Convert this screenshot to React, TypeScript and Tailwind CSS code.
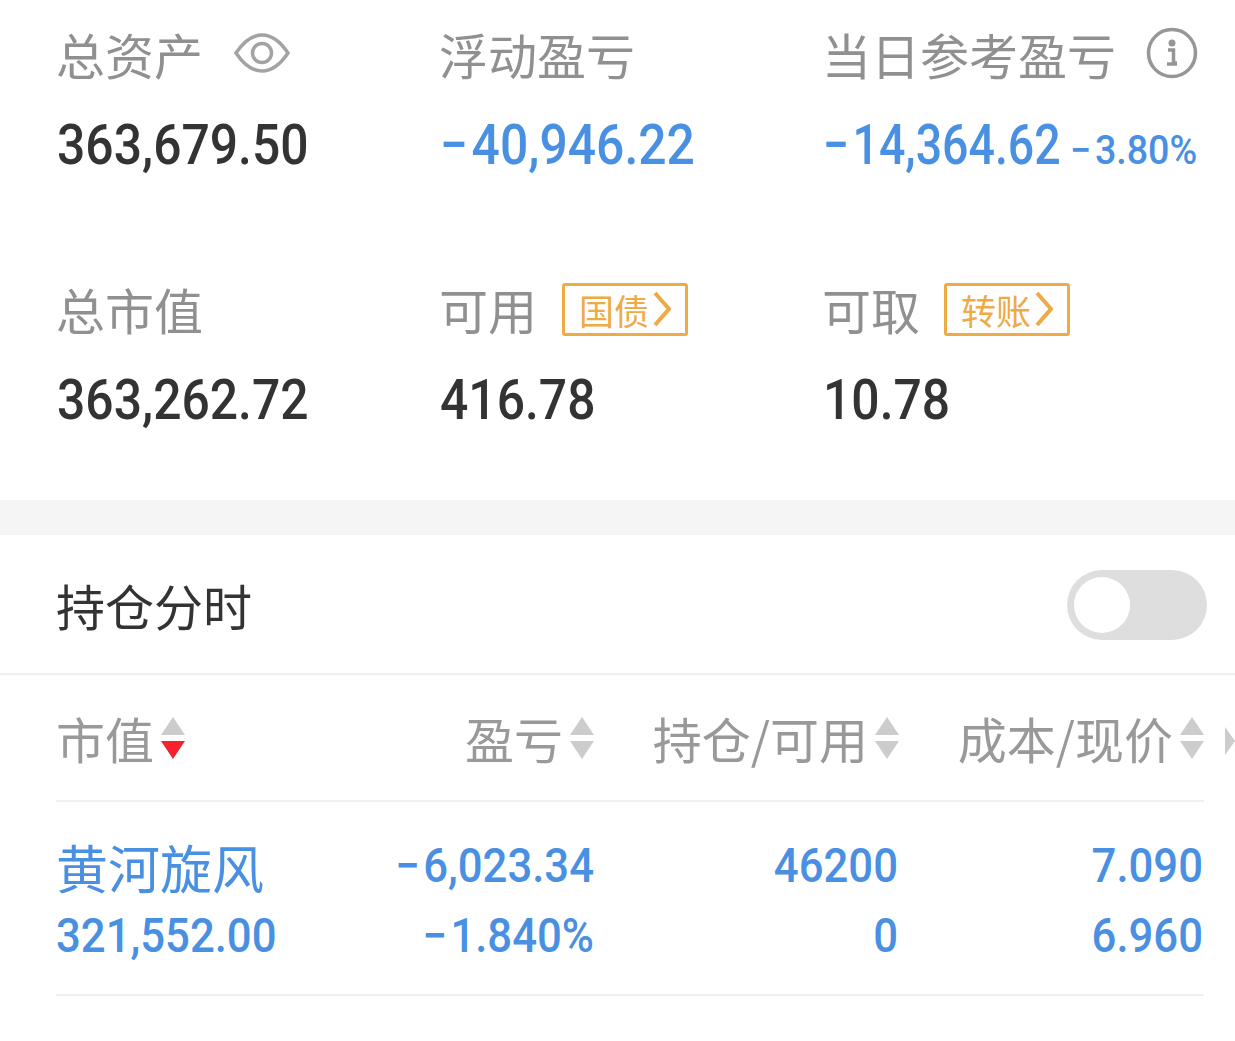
import React from 'react';

const NUM = "font-['Roboto','Liberation_Sans',sans-serif]";
const CJK = "font-['Noto_Sans_CJK_SC',sans-serif]";

function SortArrows({ active }: { active?: boolean }) {
  return (
    <svg width="24" height="42" viewBox="0 0 24 42" className="shrink-0">
      <path d="M12 0 L24 18 H0 Z" fill="#cccccc" />
      <path d="M0 24 H24 L12 42 Z" fill={active ? '#f5222d' : '#cccccc'} />
    </svg>
  );
}

function Eye() {
  return (
    <svg width="56" height="44" viewBox="0 0 56 44" fill="none" stroke="#a3a3a3" strokeWidth="3.5">
      <path d="M2 22 C10 10 19 4 28 4 C37 4 46 10 54 22 C46 34 37 40 28 40 C19 40 10 34 2 22 Z" />
      <circle cx="28" cy="22" r="9.5" />
    </svg>
  );
}

function Info() {
  return (
    <svg width="52" height="52" viewBox="0 0 52 52" fill="none">
      <circle cx="26" cy="26" r="23.5" stroke="#969696" strokeWidth="3.5" />
      <circle cx="26" cy="16" r="3.5" fill="#969696" />
      <path d="M22 23 H27.5 V36 H31 M21 37 H31" stroke="#969696" strokeWidth="3.5" />
    </svg>
  );
}

function Tag({ text, className }: { text: string; className: string }) {
  return (
    <span className={`mt-0.5 flex h-[53px] w-[126px] items-center justify-center rounded-[3px] border-[3px] border-[#eeaa44] text-[35px] leading-none text-[#eeaa44] ${CJK} ${className}`}>
      {text}
      <svg width="18" height="36" viewBox="0 0 18 36" fill="none" stroke="#eeaa44" strokeWidth="4" className="ml-1">
        <path d="M2 2 L16 18 L2 34" />
      </svg>
    </span>
  );
}

// the minus sits a little apart from the digits
const neg = (v: string) => (
  <>
    <span className="mr-1">−</span>
    {v}
  </>
);

function Stat({ label, extra, value, sub, blue, squeeze = 'scale-x-[0.89]' }: { label: string; extra?: React.ReactNode; value: React.ReactNode; sub?: React.ReactNode; blue?: boolean; squeeze?: string }) {
  return (
    <div>
      <div className="-ml-0.5 flex h-[56px] items-center">
        <span className={`text-[49px] leading-none text-[#909090] ${CJK}`}>{label}</span>
        {extra}
      </div>
      <div className={`mt-9 -ml-px flex h-[56px] items-baseline text-[56px] leading-[56px] font-medium whitespace-nowrap ${NUM} ${blue ? 'text-[#4a90e2]' : 'text-[#333333]'}`}>
        <span className={`origin-left ${squeeze}`}>{value}</span>
        {sub && <span className="-ml-[39px] origin-left scale-x-[0.94] text-[40px]">{sub}</span>}
      </div>
    </div>
  );
}

function HeadCell({ label, active, className }: { label: string; active?: boolean; className?: string }) {
  return (
    <div className={`flex items-center gap-[7px] ${className ?? ''}`}>
      <span className={`text-[49px] leading-none text-[#999999] ${CJK}`}>{label}</span>
      <SortArrows active={active} />
    </div>
  );
}

function Num({ children, left }: { children: React.ReactNode; left?: boolean }) {
  return (
    <div className={`-translate-y-px scale-x-[0.91] text-[48px] leading-[70px] font-medium ${NUM} ${left ? 'origin-left' : 'origin-right text-right'}`}>
      {children}
    </div>
  );
}

function Row({ name, cap, pl, pct, hold, avail, cost, price }: Record<string, React.ReactNode>) {
  return (
    <div className="grid h-[194px] grid-cols-[300px_238px_304px_305px] content-center border-b-2 border-[#f0f0f0] pt-2 text-[#4a90e2]">
      <div className={`h-[70px] text-[52px] leading-[70px] ${CJK}`}>{name}</div>
      <Num>{pl}</Num>
      <Num>{hold}</Num>
      <Num>{cost}</Num>
      <Num left>{cap}</Num>
      <Num>{pct}</Num>
      <Num>{avail}</Num>
      <Num>{price}</Num>
    </div>
  );
}

export default function App() {
  return (
    <div className="h-[1041px] overflow-hidden bg-white">
      {/* account summary */}
      <div className="grid h-[500px] grid-cols-[383px_383px_1fr] content-start gap-y-[107px] pt-[25px] pl-[58px]">
        <Stat label="总资产" extra={<span className="ml-[31px]"><Eye /></span>} value="363,679.50" />
        <Stat label="浮动盈亏" value={neg('40,946.22')} blue />
        <Stat
          label="当日参考盈亏"
          extra={<span className="ml-[30px]"><Info /></span>}
          value={neg('14,364.62')}
          sub={neg('3.80%')}
          squeeze="scale-x-[0.83]"
          blue
        />
        <Stat label="总市值" value="363,262.72" />
        <Stat label="可用" extra={<Tag text="国债" className="ml-[25px]" />} value="416.78" />
        <Stat label="可取" extra={<Tag text="转账" className="ml-6" />} value="10.78" />
      </div>

      <div className="h-[35px] bg-[#f5f5f5]" />

      <div className="flex h-[140px] items-center justify-between border-b-2 border-[#f0f0f0] pt-0.5 pr-7 pl-14">
        <span className={`-mt-0.5 text-[49px] leading-none text-[#333333] ${CJK}`}>持仓分时</span>
        <div className="h-[70px] w-[140px] rounded-full bg-[#dedede] p-[7px]">
          <div className="h-14 w-14 rounded-full bg-white" />
        </div>
      </div>

      {/* positions table */}
      <div className="relative pr-[31px] pl-14">
        <div className="flex h-[127px] items-center border-b-2 border-[#f0f0f0]">
          <HeadCell label="市值" active className="w-[300px]" />
          <HeadCell label="盈亏" className="w-[238px] justify-end" />
          <HeadCell label="持仓/可用" className="w-[305px] justify-end" />
          <HeadCell label="成本/现价" className="w-[305px] justify-end" />
        </div>
        <svg width="10" height="28" viewBox="0 0 10 28" className="absolute top-[52px] right-0">
          <path d="M0 0 L10 14 L0 28 Z" fill="#cccccc" />
        </svg>
        <Row name="黄河旋风" cap="321,552.00" pl={neg('6,023.34')} pct={neg('1.840%')} hold="46200" avail="0" cost="7.090" price="6.960" />
      </div>
    </div>
  );
}
